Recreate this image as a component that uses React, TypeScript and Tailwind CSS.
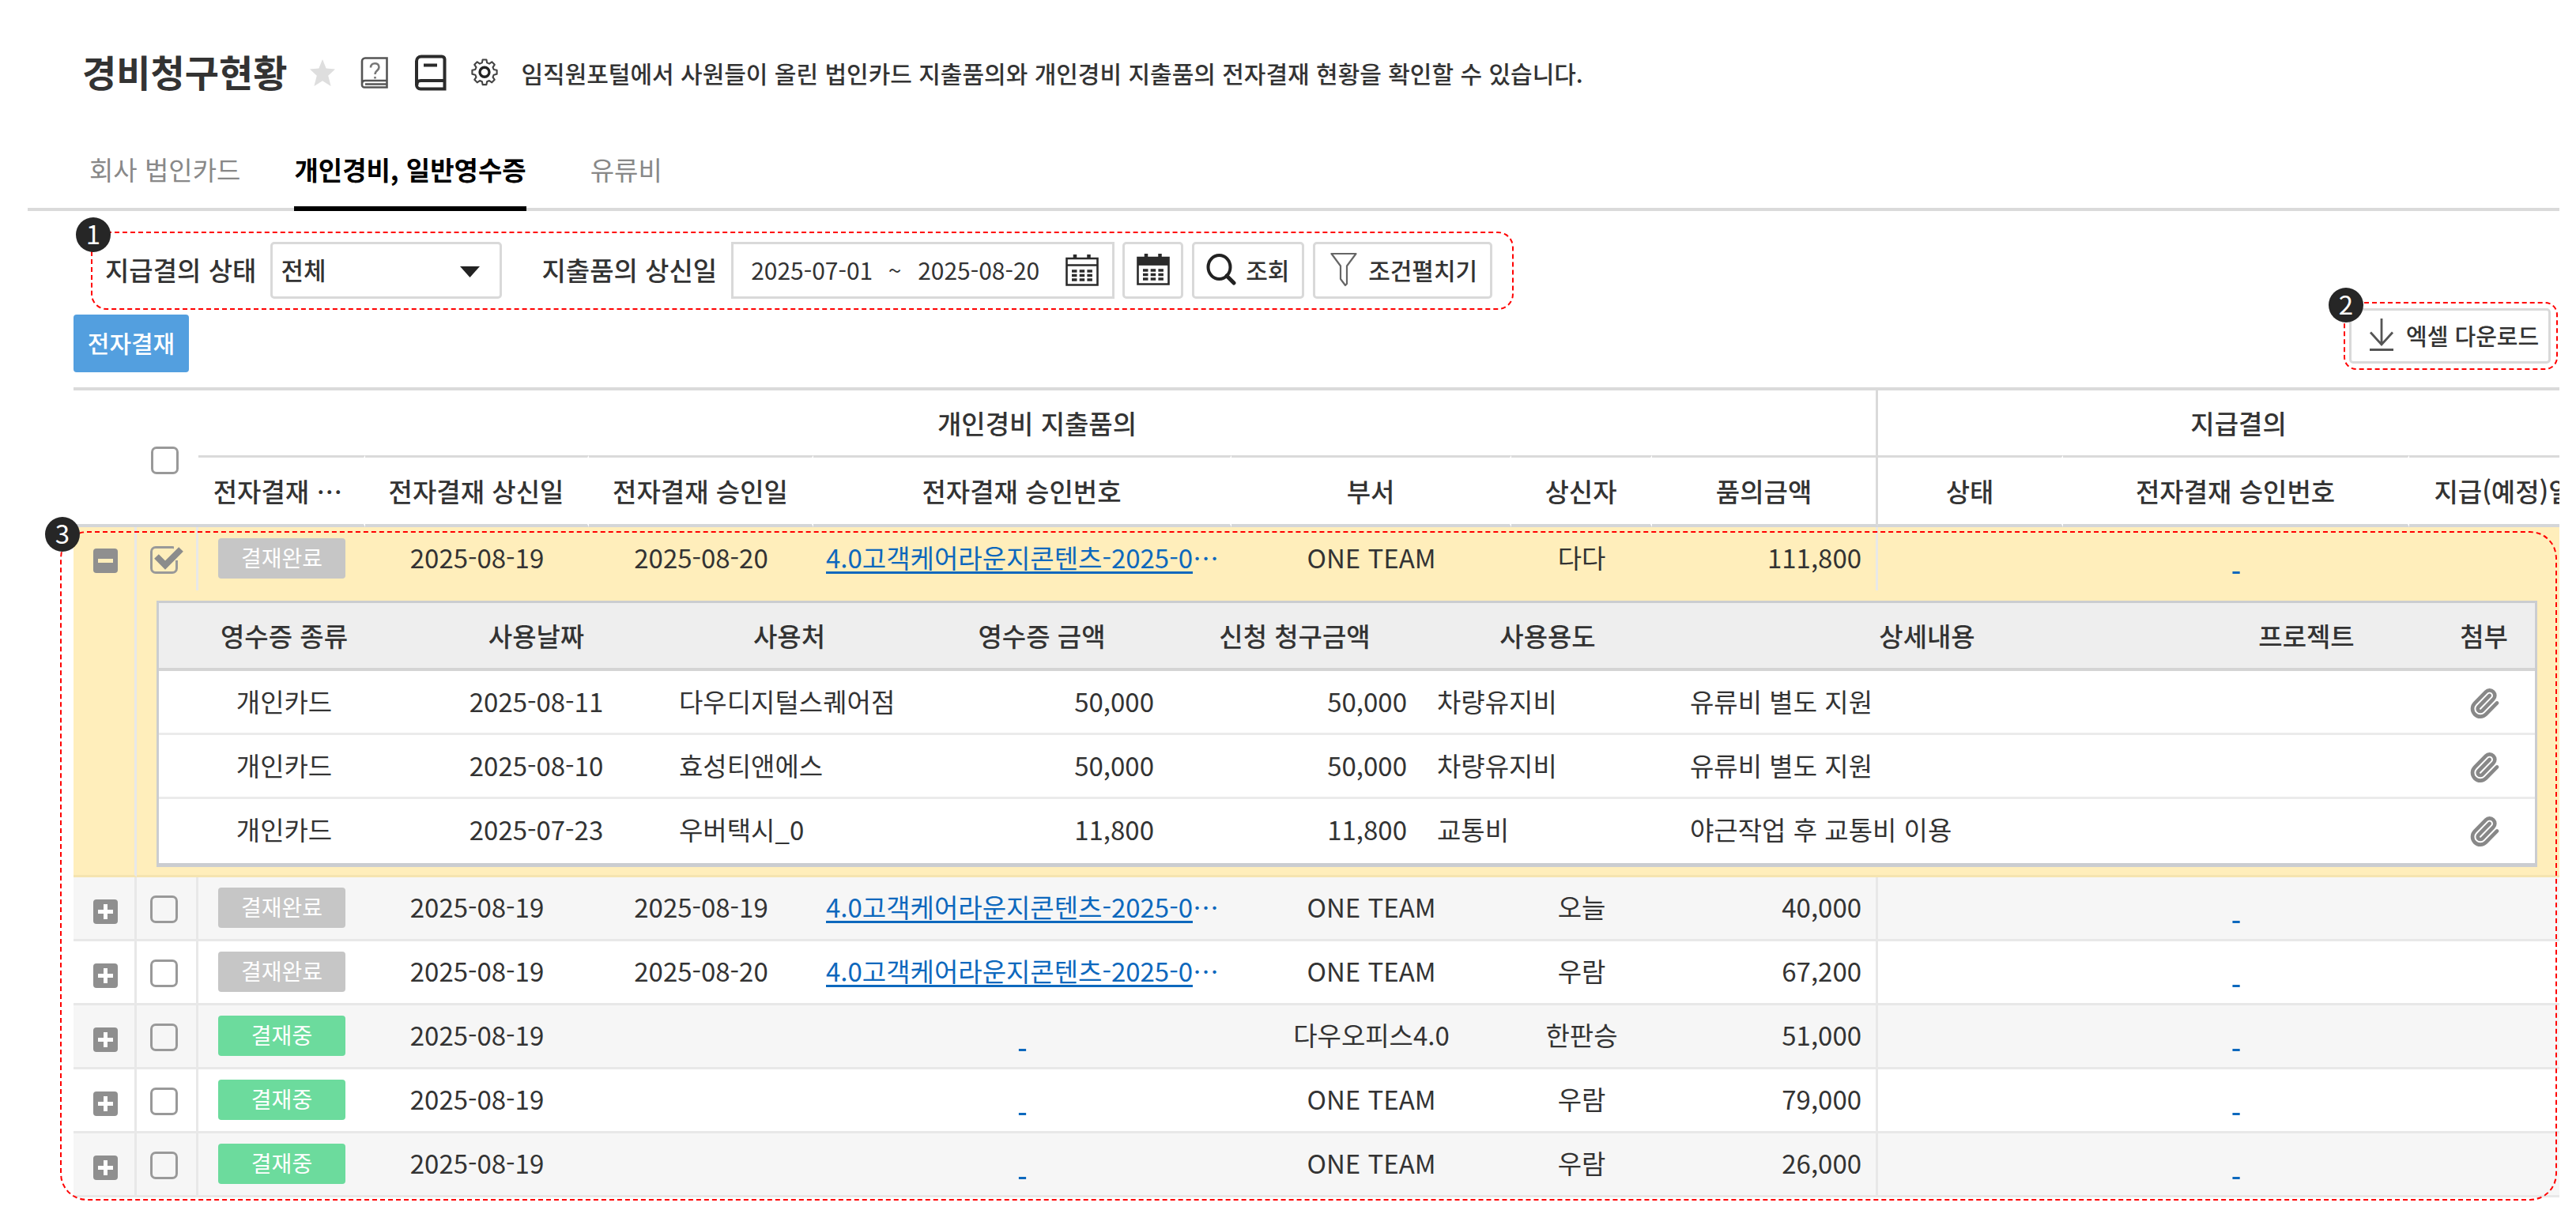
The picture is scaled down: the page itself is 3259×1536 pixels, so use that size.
import { useState } from 'react';
import { Paperclip } from 'lucide-react';
import clsx from 'clsx';

type Claim = {
  id: number;
  status: '결재완료' | '결재중';
  submitted: string;
  approved: string;
  docNo: string;
  team: string;
  name: string;
  amount: string;
};

const tabs = ['회사 법인카드', '개인경비, 일반영수증', '유류비'];

const claims: Claim[] = [
  { id: 1, status: '결재완료', submitted: '2025-08-19', approved: '2025-08-20', docNo: '4.0고객케어라운지콘텐츠-2025-0', team: 'ONE TEAM', name: '다다', amount: '111,800' },
  { id: 2, status: '결재완료', submitted: '2025-08-19', approved: '2025-08-19', docNo: '4.0고객케어라운지콘텐츠-2025-0', team: 'ONE TEAM', name: '오늘', amount: '40,000' },
  { id: 3, status: '결재완료', submitted: '2025-08-19', approved: '2025-08-20', docNo: '4.0고객케어라운지콘텐츠-2025-0', team: 'ONE TEAM', name: '우람', amount: '67,200' },
  { id: 4, status: '결재중', submitted: '2025-08-19', approved: '', docNo: '', team: '다우오피스4.0', name: '한판승', amount: '51,000' },
  { id: 5, status: '결재중', submitted: '2025-08-19', approved: '', docNo: '', team: 'ONE TEAM', name: '우람', amount: '79,000' },
  { id: 6, status: '결재중', submitted: '2025-08-19', approved: '', docNo: '', team: 'ONE TEAM', name: '우람', amount: '26,000' },
];

const receipts = [
  { type: '개인카드', date: '2025-08-11', place: '다우디지털스퀘어점', amount: '50,000', claimed: '50,000', usage: '차량유지비', detail: '유류비 별도 지원' },
  { type: '개인카드', date: '2025-08-10', place: '효성티앤에스', amount: '50,000', claimed: '50,000', usage: '차량유지비', detail: '유류비 별도 지원' },
  { type: '개인카드', date: '2025-07-23', place: '우버택시_0', amount: '11,800', claimed: '11,800', usage: '교통비', detail: '야근작업 후 교통비 이용' },
];

const StarIcon = () => (
  <svg className="h-[36px] w-[34px]" viewBox="0 0 34 36" fill="#dedede">
    <path d="M17 1l4.6 11.6L33 13.4l-8.8 8.4L27.6 35 17 28.2 6.4 35l3.4-13.2L1 13.4l11.4-.8z" />
  </svg>
);

const HelpBookIcon = () => (
  <svg className="h-[40px] w-[36px]" viewBox="0 0 36 40" fill="none" stroke="#555" strokeWidth="2.6">
    <path d="M6 1.500h27.500v37H5a3 3 0 0 1-3-3V5.500a4 4 0 0 1 4-4zM2 34c0-3 1.500-4 4-4h27.500M6 34.500h27" />
    <path d="M13 13.500c0-7 10.500-7 10.500-.5 0 4.500-5 4-5 9M18.500 25v2.400" stroke="#777" />
  </svg>
);

const BookIcon = () => (
  <svg className="h-[46px] w-[40px]" viewBox="0 0 40 46" fill="none" stroke="#2b2b2b" strokeWidth="4">
    <path d="M8 2.500h26a3.500 3.500 0 0 1 3.500 3.500v37.500H7a5 5 0 0 1-5-5V8.500a6 6 0 0 1 6-6z" />
    <path d="M2.500 38.500c0-4 1.500-5.500 5-5.500h30M11 13.500h17" />
  </svg>
);

const GearIcon = () => (
  <svg className="h-[38px] w-[36px]" viewBox="0 0 24 24" fill="none" stroke="#444" strokeWidth="1.400" strokeLinejoin="round">
    <path d="M10.400 1h3.200l.5 2.600 1.900.8 2.200-1.500 2.300 2.300L19 7.400l.8 1.900 2.600.5v3.400l-2.600.6-.8 1.900 1.500 2.200-2.300 2.300-2.200-1.500-1.900.8-.5 2.600h-3.200l-.5-2.600-1.900-.8-2.200 1.500-2.300-2.300L5 15.700l-.8-1.900-2.600-.6V9.800l2.600-.5L5 7.400 3.500 5.200l2.300-2.300L8 4.400l1.900-.8z" />
    <circle cx="12" cy="11.500" r="4" stroke="#222" strokeWidth="2.200" />
  </svg>
);

const CalendarIcon = ({ filled = false }: { filled?: boolean }) => (
  <svg className="h-[40px] w-[42px]" viewBox="0 0 42 40" fill="none" stroke="#2b2b2b">
    <path d="M1.500 5h39v33.500h-39z" strokeWidth="2.600" />
    <path d="M1.500 13.500h39" strokeWidth="2.600" />
    {filled && <path d="M1.500 5h39v9h-39z" fill="#2b2b2b" />}
    <path d="M12 0v6M29.500 0v6" strokeWidth="4.500" />
    <path d="M8 21h26M8 26.500h26M8 32h26" strokeWidth="3.400" strokeDasharray="6.500 3.200" />
  </svg>
);

const SearchIcon = () => (
  <svg className="h-[40px] w-[38px]" viewBox="0 0 38 40" fill="none" stroke="#222">
    <ellipse cx="16.500" cy="17" rx="14" ry="15" strokeWidth="4" />
    <path d="M26 28l9 9" strokeWidth="5" strokeLinecap="round" />
  </svg>
);

const FunnelIcon = () => (
  <svg className="h-[44px] w-[34px]" viewBox="0 0 34 44" fill="none" stroke="#666" strokeWidth="2.200" strokeLinejoin="round">
    <path d="M1.500 2h31L21 17.500V40l-2 2-6-8V17.500z" />
  </svg>
);

const DownloadIcon = () => (
  <svg className="h-[42px] w-[32px]" viewBox="0 0 32 42" fill="none" stroke="#555">
    <path d="M16 0v32M2 17.500L16 33l14-15.500" strokeWidth="2.800" />
    <path d="M1 39.500h30" strokeWidth="3" />
  </svg>
);

// Red dashed frame with a numbered marker in the top left corner
const Callout = ({ no, className }: { no: number; className: string }) => (
  <div className={clsx('pointer-events-none absolute z-10 border-2 border-dashed border-[#ff0000]', className)}>
    <span className="absolute -top-[20px] -left-[21px] flex size-[44px] items-center justify-center rounded-full bg-[#262626] pb-[3px] text-[33px] leading-none text-white">
      {no}
    </span>
  </div>
);

const Checkbox = ({ label, checked, onChange }: { label: string; checked: boolean; onChange: () => void }) => (
  <span className="relative mr-[7px] inline-block size-[35px] align-middle">
    <input
      type="checkbox"
      aria-label={label}
      checked={checked}
      onChange={onChange}
      className="block size-[35px] appearance-none rounded-[7px] border-3 border-[#999]"
    />
    {checked && (
      <svg className="pointer-events-none absolute top-0 left-0 h-[35px] w-[42px]" viewBox="0 0 42 35" fill="none">
        <path d="M30 0h6v18h-6z" fill="#ffeebb" />
        <path d="M8 13l11 11L39 4" stroke="#8c8c8c" strokeWidth="8" />
      </svg>
    )}
  </span>
);

const ExpandButton = ({ open, onClick }: { open: boolean; onClick: () => void }) => (
  <button
    type="button"
    aria-label={open ? '접기' : '펼치기'}
    onClick={onClick}
    className={clsx('ml-1 inline-block size-[31px] rounded-[4px] bg-[#8f8f8f] align-middle', !open && 'mt-2')}
  >
    <svg viewBox="0 0 31 31" fill="none" stroke={open ? '#ffeebb' : '#fff'} strokeWidth="5">
      <path d={open ? 'M6 15.500h19' : 'M6 15.500h19M15.500 6v19'} />
    </svg>
  </button>
);

const DocLink = ({ docNo }: { docNo: string }) => (
  <>
    <a href="#" className="text-[#0d68bd] underline decoration-3 underline-offset-4">
      {docNo || '\u00a0'}
    </a>
    {docNo && <span className="text-[#0d68bd]">…</span>}
  </>
);

const toolButton = 'flex h-[72px] items-center rounded-[5px] border-3 border-[#d9d9d9] bg-white pb-[2px] text-[30px] font-medium';

const ReceiptTable = () => (
  <table className="w-[3012px] table-fixed border-separate border-spacing-0 border-x-3 border-t-3 border-b-5 border-[#cbcdd0] bg-white">
    <colgroup>
      <col className="w-[317px]" />
      <col className="w-[321px]" />
      <col className="w-[319px]" />
      <col className="w-[320px]" />
      <col className="w-[320px]" />
      <col className="w-[320px]" />
      <col className="w-[640px]" />
      <col className="w-[320px]" />
      <col />
    </colgroup>
    <thead>
      <tr className="h-[86px] bg-[#eee] [&>th]:border-b-4 [&>th]:border-[#d4d4d4] [&>th]:p-0 [&>th]:font-medium">
        <th>영수증 종류</th>
        <th>사용날짜</th>
        <th>사용처</th>
        <th>영수증 금액</th>
        <th>신청 청구금액</th>
        <th>사용용도</th>
        <th>상세내용</th>
        <th>프로젝트</th>
        <th>첨부</th>
      </tr>
    </thead>
    <tbody>
      {receipts.map((r) => (
        <tr
          key={r.date}
          className="h-[81px] [&>td]:border-b-3 [&>td]:border-[#ebebeb] [&>td]:px-[20px] [&>td]:pt-0 [&>td]:pb-[3px] last:[&>td]:border-b-0 last:[&>td]:pb-[6px]"
        >
          <td className="text-center">{r.type}</td>
          <td className="text-center">{r.date}</td>
          <td>{r.place}</td>
          <td className="pr-[18px]! text-right">{r.amount}</td>
          <td className="pr-[18px]! text-right">{r.claimed}</td>
          <td>{r.usage}</td>
          <td>{r.detail}</td>
          <td />
          <td className="text-center">
            <button type="button" aria-label="첨부파일" className="mt-1 inline-block align-middle">
              <Paperclip className="size-[40px] text-[#888]" strokeWidth={2.8} />
            </button>
          </td>
        </tr>
      ))}
    </tbody>
  </table>
);

export default function App() {
  const [tab, setTab] = useState(1);
  const [expanded, setExpanded] = useState<number | null>(1);
  const [checked, setChecked] = useState<number[]>([1]);

  const toggle = (id: number) =>
    setChecked((prev) => (prev.includes(id) ? prev.filter((x) => x !== id) : [...prev, id]));

  const toggleAll = () => setChecked(checked.length === claims.length ? [] : claims.map((c) => c.id));

  return (
    <div className="min-h-screen overflow-x-hidden bg-white pt-[56px] pr-[21px] font-['Noto_Sans_CJK_KR',sans-serif] text-[33px] leading-[40px] text-[#333]" lang="ko">
      <header className="flex h-[72px] items-center pl-[104px]">
        <h1 className="pb-1 text-[47px] leading-[68px] font-bold whitespace-nowrap">경비청구현황</h1>
        <button type="button" aria-label="즐겨찾기" className="ml-[28px]"><StarIcon /></button>
        <button type="button" aria-label="도움말" className="ml-[31px]"><HelpBookIcon /></button>
        <button type="button" aria-label="매뉴얼" className="ml-[33px]"><BookIcon /></button>
        <button type="button" aria-label="설정" className="ml-[30px]"><GearIcon /></button>
        <p className="ml-[28px] text-[30px] font-medium whitespace-nowrap">
          임직원포털에서 사원들이 올린 법인카드 지출품의와 개인경비 지출품의 전자결재 현황을 확인할 수 있습니다.
        </p>
      </header>

      <nav className="mt-[39px] ml-[35px] flex border-b-4 border-[#dadada] pl-[44px]">
        {tabs.map((name, i) => (
          <button
            key={name}
            type="button"
            onClick={() => setTab(i)}
            className={clsx('-mb-[4px] px-[34px]', i === 2 && 'ml-[13px]')}
          >
            <span
              className={clsx(
                'flex h-[100px] items-center border-b-6',
                tab === i ? 'border-black font-bold text-black' : 'border-transparent text-[#888]'
              )}
            >
              {name}
            </span>
          </button>
        ))}
      </nav>

      <main className="pl-[93px]">
        <form className="relative mt-[39px] ml-[40px] flex w-fit items-center" onSubmit={(e) => e.preventDefault()}>
          <Callout no={1} className="-top-[13px] -right-[27px] -bottom-[14px] -left-[18px] rounded-[20px]" />
          <label htmlFor="state" className="pb-[3px] font-medium">지급결의 상태</label>
          <div className="relative ml-[18px]">
            <select id="state" className="h-[72px] w-[293px] appearance-none rounded-[5px] border-3 border-[#d9d9d9] bg-white pb-[3px] pl-[10px] text-[31px] font-medium">
              <option>전체</option>
            </select>
            <svg className="pointer-events-none absolute top-[31px] right-[28px] h-[14px] w-[25px]" viewBox="0 0 25 14" fill="#222">
              <path d="M0 0h25L12.500 14z" />
            </svg>
          </div>
          <label htmlFor="from" className="ml-[50px] pb-[3px] font-medium">지출품의 상신일</label>
          <div className="ml-[18px] flex h-[72px] w-[485px] items-center border-3 border-[#d9d9d9] pl-[22px] text-[30px]">
            <input id="from" defaultValue="2025-07-01" className="w-[157px] pb-[3px] outline-none" />
            <span className="w-[54px] pr-1 pb-[3px] text-center">~</span>
            <input aria-label="종료일" defaultValue="2025-08-20" className="w-[158px] pb-[3px] outline-none" />
            <button type="button" aria-label="달력" className="ml-[29px]"><CalendarIcon /></button>
          </div>
          <button type="button" aria-label="기간 선택" className={clsx(toolButton, 'ml-[10px] w-[77px] justify-center')}>
            <CalendarIcon filled />
          </button>
          <button type="submit" className={clsx(toolButton, 'ml-[11px] w-[142px] gap-[12px] pl-[15px]')}>
            <SearchIcon />조회
          </button>
          <button type="button" className={clsx(toolButton, 'ml-[11px] w-[227px] gap-[14px] pl-[19px]')}>
            <FunnelIcon />조건펼치기
          </button>
        </form>

        <div className="mt-[12px] flex items-start justify-between">
          <button type="button" className="mt-2 h-[73px] w-[146px] rounded-[4px] bg-[#539fdf] pb-[3px] text-[30px] font-medium text-white">
            전자결재
          </button>
          <div className="relative mr-[11px]">
            <Callout no={2} className="-inset-y-[8px] -right-[9px] -left-[7px] rounded-[16px]" />
            <button type="button" className="flex h-[70px] w-[255px] items-center gap-[15px] rounded-[5px] border-3 border-[#d9d9d9] pb-[2px] pl-[22px] text-[29px] font-medium whitespace-nowrap">
              <DownloadIcon />엑셀 다운로드
            </button>
          </div>
        </div>

        <div className="relative mt-[19px]">
          <Callout no={3} className="top-[182px] right-[3px] -bottom-[4px] -left-[17px] rounded-[34px]" />
          <div className="overflow-hidden">
            <table className="w-[3195px] table-fixed border-separate border-spacing-0 border-t-4 border-[#dadada]">
              <colgroup>
                <col className="w-[80px]" />
                <col className="w-[78px]" />
                <col className="w-[211px]" />
                <col className="w-[283px]" />
                <col className="w-[284px]" />
                <col className="w-[529px]" />
                <col className="w-[354px]" />
                <col className="w-[178px]" />
                <col className="w-[286px]" />
                <col className="w-[234px]" />
                <col className="w-[438px]" />
                <col className="w-[240px]" />
              </colgroup>
              <thead className="[&_th]:p-0 [&_th]:font-medium">
                <tr className="h-[82px]">
                  <th rowSpan={2} className="border-b-4 border-[#d4d6d8]" />
                  <th rowSpan={2} className="border-b-4 border-[#d4d6d8]">
                    <Checkbox label="전체 선택" checked={checked.length === claims.length} onChange={toggleAll} />
                  </th>
                  <th colSpan={7} className="border-r-3 border-[#dadada]">개인경비 지출품의</th>
                  <th colSpan={3}>지급결의</th>
                </tr>
                <tr className="h-[91px] [&>th]:border-t-3 [&>th]:border-r-2 [&>th]:border-b-4 [&>th]:border-t-[#dadada] [&>th]:border-r-white [&>th]:border-b-[#d4d6d8]">
                  <th className="pr-[8px]!">전자결재 …</th>
                  <th>전자결재 상신일</th>
                  <th>전자결재 승인일</th>
                  <th>전자결재 승인번호</th>
                  <th>부서</th>
                  <th>상신자</th>
                  <th className="border-r-3! border-r-[#dadada]!">품의금액</th>
                  <th>상태</th>
                  <th>전자결재 승인번호</th>
                  <th className="whitespace-nowrap">지급(예정)일</th>
                </tr>
              </thead>
              {claims.map((c, i) => {
                const open = expanded === c.id;
                return (
                  <tbody key={c.id} className={clsx(open ? 'bg-[#ffeebb]' : i % 2 ? 'bg-[#f6f6f6]' : 'bg-white')}>
                    <tr
                      className={clsx(
                        '[&>td]:border-[#e8e8e8] [&>td]:px-0 [&>td]:pt-0 [&>td]:pb-[4px] [&>td]:text-center',
                        open ? 'h-[80px]' : 'h-[81px] [&>td]:border-b-3'
                      )}
                    >
                      <td className="border-r-3">
                        <ExpandButton open={open} onClick={() => setExpanded(open ? null : c.id)} />
                      </td>
                      <td className="border-r-3">
                        <Checkbox label={`${c.name} ${c.amount} 선택`} checked={checked.includes(c.id)} onChange={() => toggle(c.id)} />
                      </td>
                      <td>
                        <span
                          className={clsx(
                            'mt-[2px] inline-block h-[51px] w-[161px] rounded-[4px] align-middle text-[28px] leading-[48px] text-white',
                            c.status === '결재중' ? 'bg-[#6cdb9d]' : 'bg-[#c6c6c6]'
                          )}
                        >
                          {c.status}
                        </span>
                      </td>
                      <td>{c.submitted}</td>
                      <td>{c.approved}</td>
                      <td className="whitespace-nowrap">
                        <DocLink docNo={c.docNo} />
                      </td>
                      <td>{c.team}</td>
                      <td>{c.name}</td>
                      <td className="border-r-3 pr-[18px]! text-right!">{c.amount}</td>
                      <td />
                      <td><DocLink docNo="" /></td>
                      <td />
                    </tr>
                    {open && (
                      <tr>
                        <td className="border-r-3 border-b-3 border-r-[#e8e8e8] border-b-[#f5e4b0]" />
                        <td colSpan={11} className="border-b-3 border-[#f5e4b0] pt-[13px] pr-0 pb-[10px] pl-[25px]">
                          <ReceiptTable />
                        </td>
                      </tr>
                    )}
                  </tbody>
                );
              })}
            </table>
          </div>
        </div>
      </main>
    </div>
  );
}
